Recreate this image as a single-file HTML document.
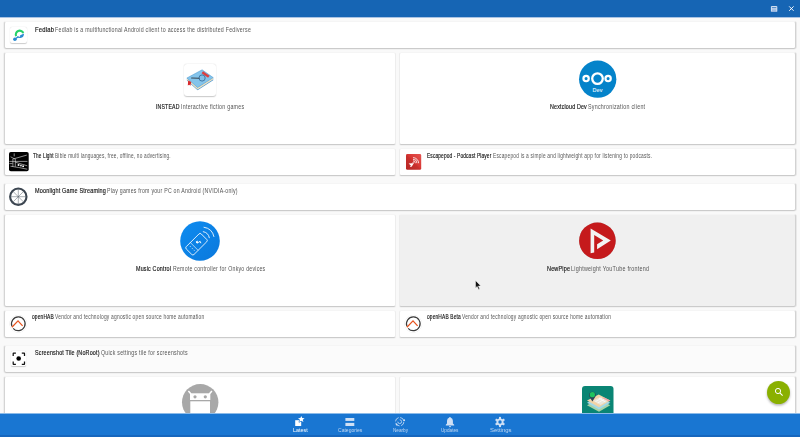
<!DOCTYPE html>
<html><head><meta charset="utf-8">
<style>
html,body{margin:0;padding:0;width:800px;height:437px;overflow:hidden;background:#f9f9f9;font-family:"Liberation Sans",sans-serif;}
.a{position:absolute;}
.card{position:absolute;background:#fff;box-sizing:border-box;border:1px solid #f5f5f5;border-bottom-color:#cbcbcb;border-radius:2.5px;}
.L{border-left-color:#d4d4d4;border-right-color:#ededed;box-shadow:-1px 0 0 #efefef,0 1px 0.6px rgba(0,0,0,.03);}
.R{border-left-color:#ededed;border-right-color:#d2d2d2;box-shadow:1px 0 0 #e9e9e9,0 1px 0.6px rgba(0,0,0,.03);}
.F{border-left-color:#d4d4d4;border-right-color:#d2d2d2;box-shadow:-1px 0 0 #efefef,1px 0 0 #e9e9e9,0 1px 0.6px rgba(0,0,0,.03);}
.t{position:absolute;font-size:5.7px;line-height:7px;white-space:nowrap;color:#4a4a4a;}
.t b{color:#1e1e1e;font-weight:bold;}
.nb,.nr{position:absolute;font-size:6.3px;line-height:6px;white-space:nowrap;transform-origin:0 0;}
.nb{color:#111;-webkit-text-stroke:0.14px #111;letter-spacing:0.2px;}
.nr{color:#555;letter-spacing:0.3px;}
.bl{position:absolute;font-size:5.2px;line-height:5px;white-space:nowrap;color:#c2d7f1;transform-origin:0 0;}
svg{position:absolute;overflow:visible;}
</style></head><body>
<!-- top bar -->
<div class="a" style="left:0;top:0;width:800px;height:17px;background:#1665b4;"></div>
<div class="a" style="left:0;top:17px;width:800px;height:1px;background:#a9c3e3;"></div>

<!-- cards -->
<div class="card F" style="left:4px;top:21px;width:792px;height:28px;"></div>
<div class="card L" style="left:4px;top:52px;width:392px;height:93px;"></div>
<div class="card R" style="left:399px;top:52px;width:397px;height:93px;"></div>
<div class="card L" style="left:4px;top:148px;width:392px;height:28px;"></div>
<div class="card R" style="left:399px;top:148px;width:397px;height:28px;"></div>
<div class="card F" style="left:4px;top:183px;width:792px;height:28px;"></div>
<div class="card L" style="left:4px;top:214px;width:392px;height:93px;"></div>
<div class="card R" style="left:399px;top:214px;width:397px;height:93px;background:#f0f0f0;"></div>
<div class="card L" style="left:4px;top:310px;width:392px;height:28px;"></div>
<div class="card R" style="left:399px;top:310px;width:397px;height:28px;"></div>
<div class="card F" style="left:4px;top:345px;width:792px;height:28px;background:#fbfbfb;"></div>
<div class="card L" style="left:4px;top:376px;width:392px;height:60px;"></div>
<div class="card R" style="left:399px;top:376px;width:397px;height:60px;"></div>

<!-- texts -->
<div class="nb" style="left:35.00px;top:26.80px;transform:scaleX(0.933)">Fedlab</div>
<div class="nr" style="left:55.40px;top:26.80px;transform:scaleX(0.835)">Fedlab is a multifunctional Android client to access the distributed Fediverse</div>
<div class="nb" style="left:155.60px;top:104.10px;transform:scaleX(0.821)">INSTEAD</div>
<div class="nr" style="left:180.60px;top:104.10px;transform:scaleX(0.840)">Interactive fiction games</div>
<div class="nb" style="left:550.20px;top:104.10px;transform:scaleX(0.848)">Nextcloud Dev</div>
<div class="nr" style="left:587.90px;top:104.10px;transform:scaleX(0.845)">Synchronization client</div>
<div class="nb" style="left:32.50px;top:152.85px;transform:scaleX(0.739)">The Light</div>
<div class="nr" style="left:54.60px;top:152.85px;transform:scaleX(0.749)">Bible multi languages, free, offline, no advertising.</div>
<div class="nb" style="left:427.20px;top:152.80px;transform:scaleX(0.761)">Escapepod - Podcast Player</div>
<div class="nr" style="left:493.30px;top:152.80px;transform:scaleX(0.762)">Escapepod is a simple and lightweight app for listening to podcasts.</div>
<div class="nb" style="left:35.00px;top:187.90px;transform:scaleX(0.872)">Moonlight Game Streaming</div>
<div class="nr" style="left:107.20px;top:187.90px;transform:scaleX(0.825)">Play games from your PC on Android (NVIDIA-only)</div>
<div class="nb" style="left:136.10px;top:265.60px;transform:scaleX(0.855)">Music Control</div>
<div class="nr" style="left:172.90px;top:265.60px;transform:scaleX(0.823)">Remote controller for Onkyo devices</div>
<div class="nb" style="left:546.75px;top:265.70px;transform:scaleX(0.869)">NewPipe</div>
<div class="nr" style="left:570.75px;top:265.70px;transform:scaleX(0.855)">Lightweight YouTube frontend</div>
<div class="nb" style="left:31.75px;top:314.20px;transform:scaleX(0.772)">openHAB</div>
<div class="nr" style="left:54.60px;top:314.20px;transform:scaleX(0.771)">Vendor and technology agnostic open source home automation</div>
<div class="nb" style="left:426.90px;top:314.10px;transform:scaleX(0.768)">openHAB Beta</div>
<div class="nr" style="left:462.10px;top:314.10px;transform:scaleX(0.769)">Vendor and technology agnostic open source home automation</div>
<div class="nb" style="left:35.00px;top:349.90px;transform:scaleX(0.856)">Screenshot Tile (NoRoot)</div>
<div class="nr" style="left:100.80px;top:349.90px;transform:scaleX(0.829)">Quick settings tile for screenshots</div>
<!-- /texts -->

<!-- icons -->
<!-- Fedlab -->
<div class="a" style="left:10px;top:27.3px;width:16.8px;height:15.8px;background:#fff;border-radius:2px;box-shadow:0 0.6px 1px rgba(0,0,0,.2);"></div>
<svg style="left:10px;top:27px" width="17" height="17" viewBox="0 0 17 17">
<path d="M6.1 9.1 A3.3 3.3 0 1 1 13.3 6.0" fill="none" stroke="#26d26a" stroke-width="2.1"/>
<path d="M6.6 10 L14 6.6 Q14 10.8 10.4 11.1 Q8 11.2 6.6 10Z" fill="#2a8ad0"/>
<circle cx="9.3" cy="8.9" r="0.9" fill="#fff"/>
<path d="M4.8 12.2 L8.2 9.8" stroke="#2a8ad0" stroke-width="1.3"/>
<circle cx="4.9" cy="12.3" r="1.8" fill="#2a8ad0"/>
</svg>

<!-- INSTEAD -->
<div class="a" style="left:184px;top:63.5px;width:32px;height:32px;background:#fff;border-radius:3px;box-shadow:0 0.6px 1.2px rgba(0,0,0,.22);"></div>
<svg style="left:184px;top:63.5px" width="32" height="32" viewBox="0 0 32 32">
<path d="M2.9 14 L13.6 23.5 L29.2 13.6 L29.2 16.3 L13.6 26.3 L2.9 16.6Z" fill="#4f97cf"/>
<path d="M2.9 14 L13.6 23.5 L29.2 13.6 L29.0 15.6 L13.6 25.5 L3.1 15.9Z" fill="#f4e8c8"/>
<path d="M3.5 15.2 L13.6 24.4 L28.6 14.8" fill="none" stroke="#d8c89c" stroke-width="0.3"/>
<path d="M2.9 14 L18.1 5.8 L29.2 13.6 L13.6 23.5Z" fill="#84c4eb" stroke="#4b96cf" stroke-width="0.5" stroke-linejoin="round"/>
<path d="M18.3 8.3 L24.8 12.8" stroke="#dc3f40" stroke-width="2.6"/>
<path d="M4.2 16.4 L7.2 18.0 L6.4 21.8 L5.2 20.8 L3.8 21.4Z" fill="#d8282c"/>
<circle cx="18.1" cy="14" r="3.1" fill="#80c0e8" stroke="#2d5f8c" stroke-width="0.75"/>
<path d="M7.6 14 L15 14.3" stroke="#3a4550" stroke-width="1.1" stroke-linecap="round"/>
</svg>
<!-- Nextcloud -->
<svg style="left:578px;top:60px" width="39" height="39" viewBox="0 0 39 39">
<circle cx="19.7" cy="19.2" r="18.65" fill="#0483ca"/>
<circle cx="19.5" cy="18.6" r="5.3" fill="none" stroke="#fff" stroke-width="2.3"/>
<circle cx="8.1" cy="18.6" r="2.65" fill="none" stroke="#fff" stroke-width="2.2"/>
<circle cx="30.1" cy="18.6" r="2.65" fill="none" stroke="#fff" stroke-width="2.2"/>
<text x="19.6" y="32.2" font-size="5.6" font-weight="bold" fill="#d2e8f8" text-anchor="middle" font-family="Liberation Sans">Dev</text>
</svg>

<!-- The Light -->
<svg style="left:8.6px;top:151.8px" width="20" height="20" viewBox="0 0 20 20">
<rect x="0" y="0" width="19.7" height="19.3" rx="1.8" fill="#000"/>
<g stroke="#fff" stroke-width="0.55" fill="none">
<path d="M1.6 4.8 L5.2 6.7 L17.8 3.1"/>
<path d="M5.2 1.4 V4.4"/>
<path d="M0.4 9.4 H18.4"/>
<path d="M3.9 7.6 V14.6 M6.3 7.6 V14.6 M3.4 7.4 Q5.1 5.8 6.8 7.4"/>
<path d="M1.4 14.2 Q9 15.2 18.2 17.2"/>
<path d="M6.4 10.2 L18.2 13.8"/>
<path d="M0.4 11.6 H3.5"/>
</g>
<g fill="#fff">
<rect x="8.7" y="12.1" width="1.7" height="1.8"/>
<rect x="11.2" y="12.8" width="1.5" height="1.6"/>
<rect x="13.3" y="13.5" width="1.7" height="1.6"/>
</g>
</svg>

<!-- Escapepod -->
<svg style="left:405.6px;top:153.8px" width="17" height="17" viewBox="0 0 17 17">
<defs><linearGradient id="ep" x1="1" y1="0" x2="0" y2="1"><stop offset="0" stop-color="#e65552"/><stop offset="0.5" stop-color="#d63431"/><stop offset="1" stop-color="#c22826"/></linearGradient></defs>
<rect x="0" y="0" width="15.2" height="15.8" rx="1.4" fill="url(#ep)"/>
<path d="M0 0 L15.2 15.8 L1.4 15.8 Q0 15.8 0 14.4Z" fill="#000" opacity="0.06"/>
<path d="M2.6 9.6 L5.9 12.4 Q6.6 10.9 7.6 9.4 Q5.3 9.2 2.6 9.6Z" fill="#fff"/>
<path d="M4.8 11.6 L4.0 12.9 L6.0 12.7Z" fill="#fff"/>
<circle cx="7.1" cy="9.1" r="0.75" fill="#fff"/>
<path d="M7.00 6.90 A2.3 2.3 0 0 1 9.30 9.20" fill="none" stroke="#fff" stroke-width="0.8"/>
<path d="M7.00 5.25 A3.95 3.95 0 0 1 10.95 9.20" fill="none" stroke="#fff" stroke-width="0.8"/>
<path d="M7.00 3.60 A5.6 5.6 0 0 1 12.60 9.20" fill="none" stroke="#fff" stroke-width="0.8"/>
</svg>

<!-- Moonlight -->
<svg style="left:9px;top:187px" width="19" height="19" viewBox="0 0 19 19">
<circle cx="9.3" cy="9.7" r="8.2" fill="none" stroke="#3b4550" stroke-width="2.1"/>
<g stroke="#56606a" stroke-width="0.5">
<path d="M9.3 1.5 V18 M1 9.7 H17.6 M3.4 3.8 L15.2 15.6 M15.2 3.8 L3.4 15.6"/>
</g>
</svg>

<!-- Music Control -->
<svg style="left:180px;top:220.5px" width="40" height="40" viewBox="0 0 40 40">
<defs><linearGradient id="mc" x1="0" y1="0" x2="1" y2="1"><stop offset="0" stop-color="#0e8cf0"/><stop offset="1" stop-color="#0a78dc"/></linearGradient></defs>
<circle cx="20" cy="20" r="19.8" fill="url(#mc)"/>
<g transform="translate(16.5 23.2) rotate(45)">
<rect x="-5.5" y="-10.6" width="11" height="21.2" rx="1.6" fill="none" stroke="#fff" stroke-width="0.8"/>
<path d="M-5.5 3.2 H5.5" stroke="#fff" stroke-width="0.6"/>
<path d="M-3.4 6 H-2 M-0.7 6 H0.7 M2 6 H3.4" stroke="#fff" stroke-width="0.6"/>
<path d="M-1.6 -2.8 Q-2.4 -1.2 -0.8 -1.2 Q0.4 -1.2 0 -2.6 L0.6 -4.6 L2.4 -3.8" fill="none" stroke="#fff" stroke-width="0.9"/>
<circle cx="-1" cy="-1.9" r="1" fill="#fff"/>
</g>
<path d="M22.9 10.6 A8 8 0 0 1 29.4 17.1" fill="none" stroke="#fff" stroke-width="0.85"/>
<path d="M23.6 6.2 A12.4 12.4 0 0 1 34 15.9" fill="none" stroke="#fff" stroke-width="0.85"/>
</svg>

<!-- NewPipe -->
<svg style="left:576px;top:220px" width="44" height="44" viewBox="0 0 44 44">
<circle cx="21.4" cy="20.8" r="18.3" fill="#c51a1c" style="filter:drop-shadow(0 0.4px 0.5px rgba(0,0,0,.25))"/>
<path d="M14.6 8.6 L34.8 20.6 L21.1 29.2 L21.1 24.2 L27.2 20.6 L18.2 15.1 L18.2 32.4 L14.6 33.2 Z" fill="#f3f3f3"/>
</svg>

<!-- openHAB -->
<svg style="left:9.1px;top:314.8px" width="19" height="19" viewBox="0 0 19 19">
<circle cx="9.3" cy="8.9" r="8.8" fill="#fff" style="filter:drop-shadow(0 0.5px 0.6px rgba(0,0,0,.18))"/>
<path d="M2.905 11.255 A6.85 6.85 0 1 1 4.13 13.29" fill="none" stroke="#3c3c3c" stroke-width="1.15"/>
<path d="M2.9 12.3 L9 5.9 L13.6 10.9" fill="none" stroke="#e8531d" stroke-width="1.25"/>
</svg>
<svg style="left:404.4px;top:314.9px" width="19" height="19" viewBox="0 0 19 19">
<circle cx="9.3" cy="8.9" r="8.8" fill="#fff" style="filter:drop-shadow(0 0.5px 0.6px rgba(0,0,0,.18))"/>
<path d="M2.905 11.255 A6.85 6.85 0 1 1 4.13 13.29" fill="none" stroke="#3c3c3c" stroke-width="1.15"/>
<path d="M2.9 12.3 L9 5.9 L13.6 10.9" fill="none" stroke="#e8531d" stroke-width="1.25"/>
</svg>

<!-- Screenshot tile -->
<div class="a" style="left:10.6px;top:350.6px;width:15.6px;height:15.6px;background:#fff;border-radius:1.5px;box-shadow:0 0.5px 1px rgba(0,0,0,.2);"></div>
<svg style="left:10.5px;top:350.5px" width="16" height="16" viewBox="0 0 16 16">
<g fill="none" stroke="#111" stroke-width="1.25" stroke-linejoin="round">
<path d="M2.2 4.9 V2.5 Q2.2 2.2 2.5 2.2 H4.9 M10.8 2.2 H13.2 Q13.5 2.2 13.5 2.5 V4.9 M13.5 10.6 V13 Q13.5 13.3 13.2 13.3 H10.8 M4.9 13.3 H2.5 Q2.2 13.3 2.2 13 V10.6"/>
</g>
<circle cx="7.7" cy="7.5" r="2.3" fill="#000"/>
</svg>

<!-- Android robot placeholder -->
<svg style="left:181.7px;top:384px" width="37" height="37" viewBox="0 0 37 37">
<circle cx="18.2" cy="18.2" r="18.2" fill="#a8a8a8"/>
<rect x="8" y="9.3" width="20.3" height="6.7" fill="#fff"/>
<rect x="8.3" y="17.3" width="19.7" height="20" fill="#fff"/>
<path d="M9 10 L6.4 6.9 M27.3 10 L29.9 6.9" stroke="#fff" stroke-width="1.5"/>
<circle cx="13" cy="12.8" r="1.6" fill="#a8a8a8"/>
<circle cx="23.3" cy="12.8" r="1.6" fill="#a8a8a8"/>
</svg>

<!-- Map icon -->
<svg style="left:581.8px;top:386.2px" width="32" height="30" viewBox="0 0 32 30">
<rect x="0" y="0" width="31.5" height="32" rx="3" fill="#0a8574"/>
<path d="M5 19.2 L16.7 13 L28.3 19.2 L17 25.8Z" fill="#a9d3a6"/>
<path d="M5 16.8 L16.7 10.6 L28.3 16.8 L17 23.4Z" fill="#a3d8e8"/>
<path d="M5 14.6 L16.7 8.4 L28.3 14.6 L17 21.2Z" fill="#f3d3a6"/>
<path d="M11 14.8 L18 11 L25.5 15 L18.5 19Z" fill="#ece6dc"/>
<path d="M13.5 15.5 L20 12 M15.5 17 L22 13.5 M17 12.2 L23.5 16" stroke="#fff" stroke-width="0.7"/>
<path d="M22 11.4 L28.3 14.6 L27 15.4 L20.6 12.1Z" fill="#eea0a8"/>
<path d="M7.3 10.6 A3.4 3.4 0 1 1 13.5 10.6 L10.4 15.6Z" fill="#2b4657"/>
<circle cx="10.4" cy="8.7" r="2.6" fill="#1ec45e"/>
</svg>

<!-- cursor -->
<svg style="left:475.1px;top:279.8px" width="8" height="11" viewBox="0 0 8 11">
<path d="M0.5 0.5 V7.9 L2.2 6.4 L3.6 9.4 L4.7 8.9 L3.4 6.0 L5.8 5.9Z" fill="#111" stroke="#fff" stroke-width="0.45"/>
</svg>

<!-- FAB -->
<div class="a" style="left:766.5px;top:380.5px;width:23.5px;height:23.5px;border-radius:50%;background:#8ab000;box-shadow:0 1.5px 2.5px rgba(0,0,0,.3);"></div>
<svg style="left:772.6px;top:386.3px" width="12" height="12" viewBox="0 0 12 12">
<circle cx="5" cy="5" r="2.6" fill="none" stroke="#fff" stroke-width="1"/>
<path d="M6.9 6.9 L9.6 9.6" stroke="#fff" stroke-width="1.1"/>
</svg>

<!-- bottom nav -->
<div class="a" style="left:0;top:413px;width:800px;height:1px;background:#8cbbe9;"></div>
<div class="a" style="left:0;top:414px;width:800px;height:23px;background:#1976d2;"></div>
<div class="a" style="left:0;top:435px;width:800px;height:2px;background:#1666bd;"></div>
<svg style="left:294px;top:415px" width="12" height="12" viewBox="0 0 12 12">
<rect x="1.2" y="5.2" width="6" height="5.8" fill="#fff"/>
<path d="M7.3 0.9 L8.2 3.1 L10.6 3.2 L8.7 4.7 L9.4 7.0 L7.3 5.7 L5.2 7.0 L5.9 4.7 L4.0 3.2 L6.4 3.1Z" fill="#fff" stroke="#1976d2" stroke-width="1.1" stroke-linejoin="round"/>
<path d="M7.3 0.9 L8.2 3.1 L10.6 3.2 L8.7 4.7 L9.4 7.0 L7.3 5.7 L5.2 7.0 L5.9 4.7 L4.0 3.2 L6.4 3.1Z" fill="#fff"/>
</svg>
<svg style="left:344px;top:416px" width="12" height="12" viewBox="0 0 12 12">
<rect x="1.4" y="2" width="8.9" height="2.9" fill="#cfe0f5"/>
<rect x="1.4" y="6.9" width="8.9" height="3.1" fill="#cfe0f5"/>
</svg>
<svg style="left:394px;top:416px" width="12" height="12" viewBox="0 0 12 12">
<circle cx="5.7" cy="5.7" r="4.2" fill="none" stroke="#cfe0f5" stroke-width="0.8" stroke-dasharray="5 1.6"/>
<path d="M5.7 3.8 A1.9 1.9 0 1 1 3.8 5.7" fill="none" stroke="#cfe0f5" stroke-width="0.8"/>
<circle cx="10.2" cy="4.2" r="0.9" fill="#cfe0f5"/>
<circle cx="2.6" cy="8.5" r="0.9" fill="#cfe0f5"/>
</svg>
<svg style="left:444px;top:416px" width="12" height="12" viewBox="0 0 12 12">
<path d="M5.9 0.9 Q6.7 0.9 6.9 1.7 Q8.7 2.3 8.9 4.8 V7.6 L10.2 8.8 V9.6 H1.8 V8.8 L3.0 7.6 V4.8 Q3.2 2.3 5.0 1.7 Q5.2 0.9 5.9 0.9Z" fill="#cfe0f5"/>
<rect x="5.0" y="10.2" width="2" height="0.9" fill="#cfe0f5"/>
</svg>
<svg style="left:494px;top:416px" width="12" height="12" viewBox="0 0 12 12">
<g fill="#cfe0f5">
<circle cx="6" cy="6" r="3.6"/>
<rect x="5" y="0.9" width="2" height="10.2"/>
<rect x="5" y="0.9" width="2" height="10.2" transform="rotate(60 6 6)"/>
<rect x="5" y="0.9" width="2" height="10.2" transform="rotate(120 6 6)"/>
</g>
<circle cx="6" cy="6" r="1.7" fill="#1976d2"/>
</svg>
<div class="bl" style="left:292.7px;top:428px;color:#fff;transform:scaleX(1.04)">Latest</div>
<div class="bl" style="left:337.8px;top:428px;transform:scaleX(0.97)">Categories</div>
<div class="bl" style="left:392.6px;top:428px;transform:scaleX(0.9)">Nearby</div>
<div class="bl" style="left:441.4px;top:428px;transform:scaleX(0.9)">Updates</div>
<div class="bl" style="left:489.8px;top:428px;transform:scaleX(1.15)">Settings</div>

<!-- top bar icons -->
<svg style="left:770px;top:5px" width="10" height="9" viewBox="0 0 10 9">
<defs><linearGradient id="mx" x1="0" y1="0" x2="0" y2="1"><stop offset="0" stop-color="#b9cfec"/><stop offset="1" stop-color="#8fb0dc"/></linearGradient></defs>
<rect x="1.4" y="2.6" width="5.4" height="4.4" fill="url(#mx)"/>
<path d="M1.4 6.5 V1.5 H6.8 V6.5" fill="none" stroke="#e4edf8" stroke-width="0.9"/>
</svg>
<svg style="left:787px;top:4px" width="9" height="9" viewBox="0 0 9 9">
<path d="M2.2 2.4 L6.6 6.8 M6.6 2.4 L2.2 6.8" stroke="#fff" stroke-width="0.95"/>
</svg>
</body></html>
